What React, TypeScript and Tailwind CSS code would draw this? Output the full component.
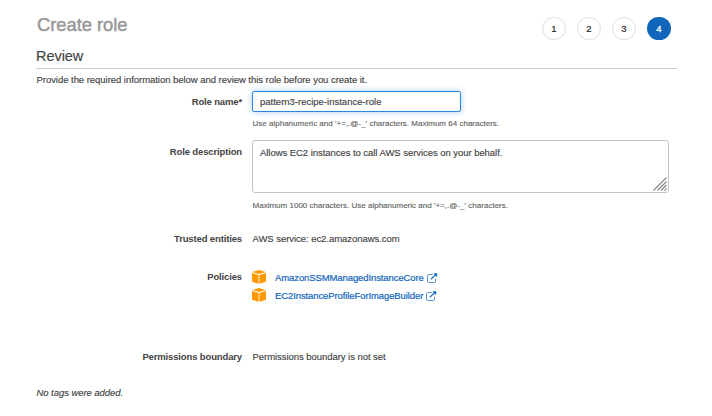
import React from "react";

function CubeIcon() {
  return (
    <svg width="14" height="14" viewBox="0 0 14 14" className="block shrink-0">
      <path d="M0 3 6.6 4.9V13.8L0 11.8Z" fill="#ff9900" />
      <path d="M14 3 7.4 4.9V13.8L14 11.8Z" fill="#ff9900" />
      <path d="M.2 2 7 .1 13.8 2 7 4Z" fill="#ff9900" />
    </svg>
  );
}

function ExternalIcon() {
  return (
    <svg width="11" height="10" viewBox="0 0 11 10" fill="none" className="block shrink-0">
      <path d="M5.6 1.5H1.6Q.5 1.5 .5 2.6V8.4Q.5 9.5 1.6 9.5H7.4Q8.5 9.5 8.5 8.4V5.8" stroke="#5594d2" strokeWidth="1" />
      <path d="M3.9 6.2 8.6 1.8" stroke="#2673c2" strokeWidth="1.3" />
      <path d="M6.3.3H10.2V4.2Z" fill="#1166bb" />
    </svg>
  );
}

function Step({ n, active }: { n: number; active?: boolean }) {
  return (
    <div
      className={
        "flex h-[23px] w-6 items-center justify-center rounded-full pt-px text-[9.5px] tracking-normal " +
        (active ? "bg-[#1166bb] text-[#e8f2fc] [-webkit-text-stroke:0.4px]" : "border border-[#ddd] text-[#222]")
      }
    >
      {n}
    </div>
  );
}

function Row({ label, className, children }: { label: string; className: string; children: React.ReactNode }) {
  return (
    <div className={"flex " + className}>
      <div className="w-[206px] shrink-0 text-right font-bold tracking-[-0.14px] [-webkit-text-stroke:0px]">{label}</div>
      <div className="ml-[10px] min-w-0 flex-1">{children}</div>
    </div>
  );
}

function Policy({ name }: { name: string }) {
  return (
    <div className="flex h-[18px] items-center">
      <CubeIcon />
      <a className="ml-[9px] pt-px tracking-[-0.1px] whitespace-nowrap text-[#1166bb] [-webkit-text-stroke:0.2px_#1166bb]">{name}</a>
      <span className="ml-[3px] pt-[2px]">
        <ExternalIcon />
      </span>
    </div>
  );
}

export default function App() {
  return (
    <div className="h-[416px] w-[712px] overflow-hidden bg-white pr-[35px] pl-9 font-['Liberation_Sans',Arial,sans-serif] text-[9.5px] leading-3 tracking-[-0.05px] whitespace-nowrap text-[#444] [-webkit-text-stroke:0.15px]">
      <header className="flex h-[45px] justify-between pt-[14px] pr-[6px]">
        <h1 className="pl-px text-[18.4px] leading-[22px] text-[#999] [-webkit-text-stroke:0.5px_#999]">Create role</h1>
        <div className="flex gap-[11px] pt-[3px]">
          <Step n={1} />
          <Step n={2} />
          <Step n={3} />
          <Step n={4} active />
        </div>
      </header>
      <h2 className="h-6 border-b border-[#ccc] pt-[2px] text-[14.5px] leading-[18px]">Review</h2>
      <p className="h-[22px] pt-[5px] pl-[0.5px] tracking-[-0.04px]">
        Provide the required information below and review this role before you create it.
      </p>
      <Row label="Role name*" className="h-[49px] [&>div:first-child]:pt-[5px]">
        <div className="flex h-[21px] w-[209px] items-center rounded-[2px] border border-[#2a86e0] pl-[7px] tracking-normal shadow-[0_0_6px_#a8cdf2]">
          pattern3-recipe-instance-role
        </div>
        <p className="pt-[6px] pl-[0.5px] text-[8px] tracking-[0.01px] text-[#666]">
          Use alphanumeric and '+=,.@-_' characters. Maximum 64 characters.
        </p>
      </Row>
      <Row label="Role description" className="h-[93px] [&>div:first-child]:pt-[6px]">
        <div className="relative h-[53px] w-[417px] rounded-[3px] border border-[#c4c4c4] pt-[6px] pl-[7px]">
          Allows EC2 instances to call AWS services on your behalf.
          <svg width="14" height="14" viewBox="0 0 14 14" className="absolute right-px bottom-px" stroke="#888" strokeWidth="1.2">
            <path d="M.5 13.5 13.5.5M4.5 13.5 13.5 4.5M8 13.5 13.5 8M11.5 13.5 13.5 11.5" />
          </svg>
        </div>
        <p className="pt-[7px] pl-[0.5px] text-[8px] tracking-[0.01px] text-[#666]">
          Maximum 1000 characters. Use alphanumeric and '+=,.@-_' characters.
        </p>
      </Row>
      <Row label="Trusted entities" className="h-[35px]">
        <span className="pl-[0.5px]">AWS service: ec2.amazonaws.com</span>
      </Row>
      <Row label="Policies" className="h-[83px] [&>div:first-child]:pt-[3px]">
        <Policy name="AmazonSSMManagedInstanceCore" />
        <Policy name="EC2InstanceProfileForImageBuilder" />
      </Row>
      <Row label="Permissions boundary" className="h-9">
        <span className="pl-[0.5px]">Permissions boundary is not set</span>
      </Row>
      <p className="pl-[0.5px] tracking-[-0.06px] italic">No tags were added.</p>
    </div>
  );
}
